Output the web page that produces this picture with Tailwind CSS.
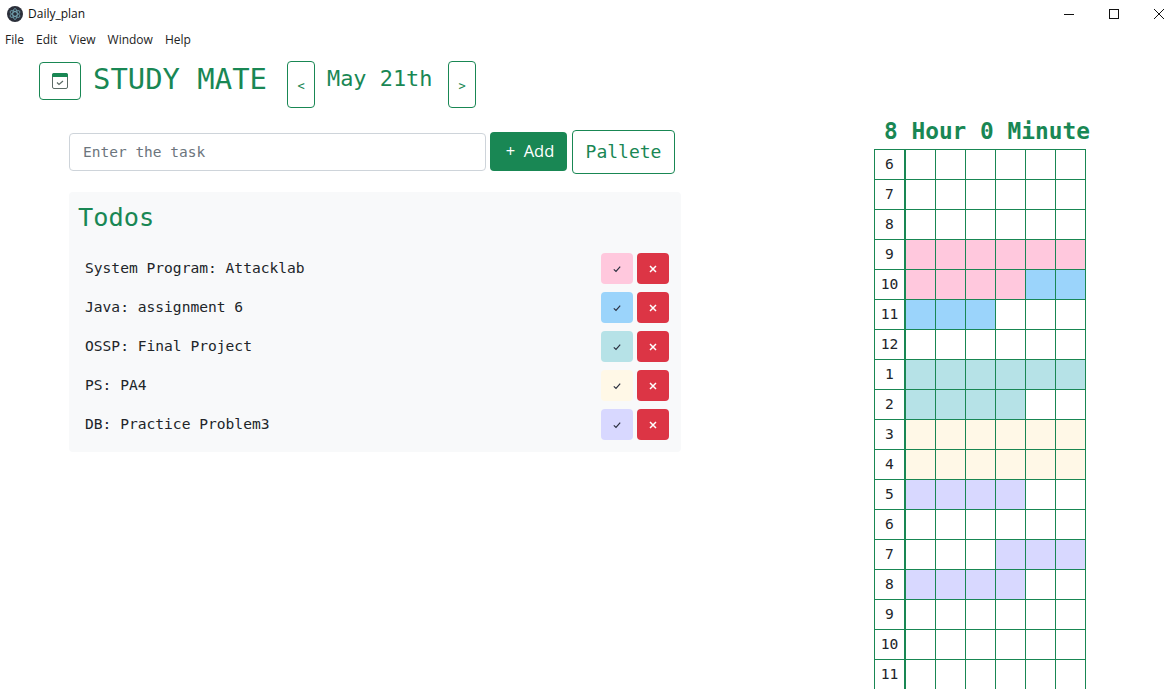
<!DOCTYPE html>
<html>
<head>
	<title>Daily_plan</title>
	<script src="https://cdn.jsdelivr.net/npm/@tailwindcss/browser@4"></script>
</head>
<body class="bg-white h-screen w-screen overflow-hidden flex flex-col font-['DejaVu_Sans_Mono',monospace]">
	<!-- window chrome -->
	<div class="h-[27px] shrink-0 flex items-center pl-[7px] font-['Open_Sans',sans-serif] text-[12px] text-[#111]">
		<svg width="16" height="16" viewBox="0 0 16 16" class="mr-[5px]">
			<circle cx="8" cy="8" r="8" fill="#2b2f3a"/>
			<g fill="none" stroke="#9feaf9" stroke-width="0.7" opacity="0.75">
				<ellipse cx="8" cy="8" rx="5.5" ry="2.2" transform="rotate(30 8 8)"/>
				<ellipse cx="8" cy="8" rx="5.5" ry="2.2" transform="rotate(90 8 8)"/>
				<ellipse cx="8" cy="8" rx="5.5" ry="2.2" transform="rotate(150 8 8)"/>
			</g>
		</svg>
		<span>Daily_plan</span>
		<div class="ml-auto flex items-center">
			<svg width="12" height="12" viewBox="0 0 12 12" class="mr-[33px]"><path d="M1 6.5H11" stroke="#111" fill="none"/></svg>
			<svg width="12" height="12" viewBox="0 0 12 12" class="mr-[33px]"><rect x="1.5" y="1.5" width="9" height="9" stroke="#111" fill="none"/></svg>
			<svg width="12" height="12" viewBox="0 0 12 12" class="mr-[2px]"><path d="M1 1L11 11M11 1L1 11" stroke="#111" fill="none"/></svg>
		</div>
	</div>
	<div class="h-[25px] shrink-0 flex items-center gap-[12px] pl-[5px] font-['Open_Sans',sans-serif] text-[12px] text-[#222]">
		<span>File</span><span>Edit</span><span>View</span><span>Window</span><span>Help</span>
	</div>

	<div class="flex grow min-h-0">
		<!-- left column -->
		<div class="w-[874px] shrink-0">
			<div class="flex items-start pl-[39px] pt-[9px] text-[#198754]">
				<button class="w-[42px] h-[38px] mt-[1px] border border-[#198754] rounded flex items-center justify-center">
					<svg width="16" height="16" viewBox="0 0 16 16">
						<rect x="0.5" y="0.5" width="15" height="15" rx="1.5" fill="none" stroke="#5c6b66"/>
						<path d="M0 2a2 2 0 0 1 2-2h12a2 2 0 0 1 2 2v2h-16z" fill="#198754"/>
						<path d="M5 9.5l2 2 4-3.5" fill="none" stroke="#5c6b66" stroke-width="1.2"/>
					</svg>
				</button>
				<h1 class="ml-[12px] w-[194px] text-[28.9px] leading-[36px]">STUDY MATE</h1>
				<button class="w-[28px] h-[47px] border border-[#198754] rounded pt-[3px] text-[12px]">&lt;</button>
				<span class="w-[133px] pl-[12px] text-[21.9px] leading-[34px] mt-[1px]">May 21th</span>
				<button class="w-[28px] h-[47px] border border-[#198754] rounded pt-[3px] text-[12px]">&gt;</button>
			</div>

			<div class="flex items-center ml-[69px] mt-[22px] h-[44px]">
				<input placeholder="Enter the task" class="w-[417px] h-[38px] px-[13px] border border-[#ced4da] rounded text-[14.5px] placeholder:text-[#6c757d] bg-white">
				<button class="ml-[4px] w-[77px] h-[39px] mb-[1px] pl-[3px] bg-[#198754] text-white rounded text-[16.5px] font-['Open_Sans',sans-serif]">+&nbsp; Add</button>
				<button class="ml-[5px] w-[103px] h-[44px] pb-[2px] border border-[#198754] text-[#198754] rounded text-[18px]">Pallete</button>
			</div>

			<div class="ml-[69px] mt-[18px] w-[612px] h-[260px] bg-[#f8f9fa] rounded pt-[9px]">
				<h2 class="ml-[9px] text-[25.3px] leading-[34px] text-[#198754]">Todos</h2>
				<ul id="todos" class="mt-[14px]"></ul>
			</div>
		</div>

		<!-- right column -->
		<div class="shrink-0">
			<div class="w-[216px] ml-[10px] mt-[64px] font-bold text-[22.8px] leading-[30px] text-[#198754] whitespace-nowrap">8 Hour 0 Minute</div>
			<div id="grid" class="mt-[3px] w-[212px] border-t border-l border-[#198754]"></div>
		</div>
	</div>

	<script>
		const todos = [
			["System Program: Attacklab", "bg-[#ffc8dd]"],
			["Java: assignment 6", "bg-[#9bd4fb]"],
			["OSSP: Final Project", "bg-[#b6e2e7]"],
			["PS: PA4", "bg-[#fff8e7]"],
			["DB: Practice Problem3", "bg-[#d8d8ff]"],
		];
		const fills = {
			P: "bg-[#ffc8dd]",
			B: "bg-[#9bd4fb]",
			T: "bg-[#b6e2e7]",
			C: "bg-[#fff8e7]",
			L: "bg-[#d8d8ff]",
			"-": "bg-white",
		};
		const rows = [
			[6, "------"], [7, "------"], [8, "------"], [9, "PPPPPP"],
			[10, "PPPPBB"], [11, "BBB---"], [12, "------"], [1, "TTTTTT"],
			[2, "TTTT--"], [3, "CCCCCC"], [4, "CCCCCC"], [5, "LLLL--"],
			[6, "------"], [7, "---LLL"], [8, "LLLL--"], [9, "------"],
			[10, "------"], [11, "------"],
		];

		document.getElementById("todos").innerHTML = todos.map(([name, color]) => `
			<li class="h-[39px] flex items-center pl-[16px] pr-[12px] text-[14.6px] text-[#212529]">
				<span class="grow pb-[2px]">${name}</span>
				<button class="${color} w-[32px] h-[31px] rounded flex items-center justify-center">
					<svg width="8" height="8" viewBox="0 0 8 8"><path d="M0.8 4.4L3 6.4L7.2 1.6" fill="none" stroke="#2b3040" stroke-width="1.2"/></svg>
				</button>
				<button class="bg-[#dc3545] w-[32px] h-[31px] rounded ml-[4px] flex items-center justify-center">
					<svg width="8" height="8" viewBox="0 0 8 8"><path d="M1 1L7 7M7 1L1 7" fill="none" stroke="#fff" stroke-width="1.5"/></svg>
				</button>
			</li>`).join("");

		document.getElementById("grid").innerHTML = rows.map(([hour, cells]) => `
			<div class="flex h-[30px]">
				<div class="w-[31px] pb-[2px] border-r-2 border-b border-[#198754] flex items-center justify-center text-[14.6px] text-[#212529]">${hour}</div>
				${[...cells].map(c => `<div class="${fills[c]} w-[30px] border-r border-b border-[#198754]"></div>`).join("")}
			</div>`).join("");
	</script>
</body>
</html>
